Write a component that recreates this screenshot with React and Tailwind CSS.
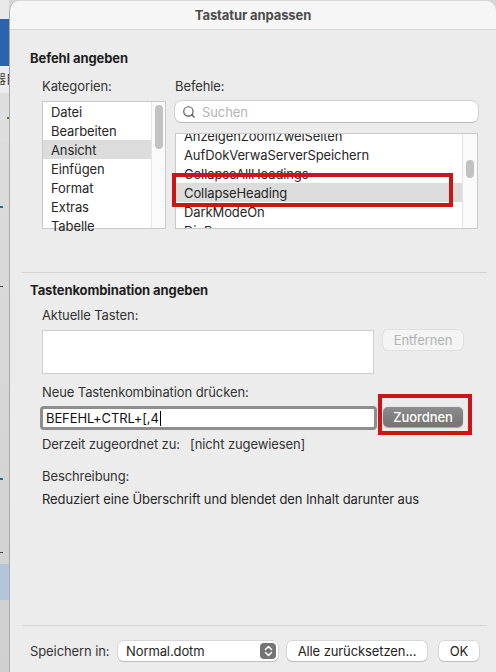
import React from 'react';
import { Search } from 'lucide-react';

const categories = ['Datei', 'Bearbeiten', 'Ansicht', 'Einfügen', 'Format', 'Extras', 'Tabelle'];
const commands = ['AnzeigenZoomZweiSeiten', 'AufDokVerwaServerSpeichern', 'CollapseAllHeadings', 'CollapseHeading', 'DarkModeOn', 'DinPane'];

// sliver of the Word window behind the sheet
const Backdrop = () => (
  <div className="flex w-[9px] shrink-0 flex-col overflow-hidden">
    <div className="h-[19px] bg-[#e9e9e9]" />
    <div className="h-[47px] bg-[#2b64ad]" />
    <div className="flex h-[27px] items-center overflow-hidden bg-[#ececec]">
      <span className="-ml-[6px] whitespace-nowrap text-[12px] leading-none text-[#333]">器目</span>
    </div>
    <div className="flex h-[50px] items-center justify-end bg-[#dedede]">
      <div className="h-[2px] w-[2px] bg-[#3c8a3c]" />
    </div>
    <div className="flex flex-1 flex-col bg-linear-to-b from-[#dcdcdc] to-[#d0d0d0]">
      <div className="mt-[63px] h-[2px] w-[3px] bg-[#2b64ad]" />
      <div className="mt-[78px] h-px w-[3px] bg-[#444]" />
      <div className="mt-[191px] h-[2px] w-[3px] bg-[#2b64ad]" />
      <div className="mt-[72px] h-px w-[3px] bg-[#444]" />
      <div className="mt-[11px] h-[36px] bg-[#b3c5db]" />
    </div>
  </div>
);

const Button = ({ children, className = '' }) => (
  <div className={`flex h-[20px] items-center justify-center rounded-[5px] bg-white text-[#222] shadow-[0_0_0_0.5px_rgba(0,0,0,0.18),0_1px_1px_rgba(0,0,0,0.12)] ${className}`}>
    {children}
  </div>
);

export default function App() {
  return (
    <div className="flex h-[672px] w-[496px] overflow-hidden bg-[#d6d6d6] font-['Inter','Noto_Sans_CJK_JP',sans-serif] text-[13px] leading-[16px] tracking-[-0.1px] text-[#262626]">
      <Backdrop />

      <div className="mt-px flex flex-1 flex-col overflow-hidden rounded-tl-[10px] rounded-tr-[10px] border-l border-[#a9a9a9] bg-[#ececec]">
        {/* title bar */}
        <div className="flex h-[29px] items-center justify-center border-b border-[#d3d3d3] bg-[#f6f6f6] font-bold text-[#4c4c4c]">
          Tastatur anpassen
        </div>

        {/* Befehl angeben */}
        <div className="mt-[20px] pl-[20px] font-bold text-[#1e1e1e]">Befehl angeben</div>
        <div className="mt-[12px] flex pl-[32px] text-[#333]">
          <span className="w-[133px]">Kategorien:</span>
          <span>Befehle:</span>
        </div>
        <div className="mt-[7px] flex gap-[9px] pl-[32px]">
          <div className="flex h-[128px] w-[124px] border border-[#c9c9c9] bg-white">
            <div className="flex-1">
              {categories.map((c) => (
                <div key={c} className={`flex h-[19px] items-center pl-[8px] ${c === 'Ansicht' ? 'bg-[#dcdcdc]' : ''}`}>{c}</div>
              ))}
            </div>
            <div className="flex w-[14px] justify-center border-l border-[#e4e4e4] bg-[#fafafa]">
              <div className="mt-[3px] h-[44px] w-[8px] rounded-full bg-[#c2c2c2]" />
            </div>
          </div>

          <div className="flex w-[303px] flex-col">
            <div className="flex h-[21px] items-center gap-[6px] rounded-[6px] bg-white pl-[7px] shadow-[0_0_0_0.5px_rgba(0,0,0,0.2),0_0.5px_1px_rgba(0,0,0,0.12)]">
              <Search size={14} strokeWidth={2} className="text-[#555]" />
              <span className="text-[#b4b4b4]">Suchen</span>
            </div>
            <div className="relative mt-[11px] flex h-[96px] border border-[#c9c9c9] bg-white">
              <div className="flex-1 overflow-hidden">
                <div className="-mt-[8px]">
                  {commands.map((c) => (
                    <div key={c} className={`flex h-[19px] items-center pl-[8px] ${c === 'CollapseHeading' ? 'bg-[#dcdcdc]' : ''}`}>{c}</div>
                  ))}
                </div>
              </div>
              <div className="flex w-[15px] justify-center border-l border-[#e4e4e4] bg-[#fafafa]">
                <div className="mt-[26px] h-[18px] w-[8px] rounded-full bg-[#c2c2c2]" />
              </div>
              <div className="absolute left-[-4px] top-[39px] h-[34px] w-[281px] border-[4px] border-[#cc1517]" />
            </div>
          </div>
        </div>

        <div className="ml-[12px] mr-[9px] mt-[43px] h-px bg-[#d3d3d3]" />

        {/* Tastenkombination angeben */}
        <div className="mt-[9px] pl-[20px] font-bold text-[#1e1e1e]">Tastenkombination angeben</div>
        <div className="mt-[9px] pl-[32px] text-[#333]">Aktuelle Tasten:</div>
        <div className="mt-[7px] flex items-start pl-[32px]">
          <div className="h-[44px] w-[332px] border border-[#cdcdcd] bg-white" />
          <div className="ml-[9px] flex h-[20px] w-[80px] items-center justify-center rounded-[5px] bg-[#f4f4f4] text-[#b3b3b3] shadow-[0_0_0_0.5px_rgba(0,0,0,0.1)]">
            Entfernen
          </div>
        </div>
        <div className="mt-[10px] pl-[32px] text-[#333]">Neue Tastenkombination drücken:</div>
        <div className="mt-[6px] flex items-start pl-[30px]">
          <div className="flex h-[24px] w-[337px] items-center rounded-[4px] border-[3px] border-[#8e8e8e] bg-white pl-[3px] text-[#111]">
            BEFEHL+CTRL+[,4
            <span className="ml-px h-[15px] w-px bg-black" />
          </div>
          <div className="relative ml-[6px] mt-px">
            <div className="flex h-[20px] w-[80px] items-center justify-center rounded-[5px] bg-linear-to-b from-[#8d8d8d] to-[#737373] font-medium text-white shadow-[0_0.5px_1px_rgba(0,0,0,0.3)]">
              Zuordnen
            </div>
            <div className="absolute left-[-5px] top-[-13px] h-[41px] w-[94px] border-[4px] border-[#cc1517]" />
          </div>
        </div>
        <div className="mt-[6px] flex pl-[32px] text-[#333]">
          <span className="w-[148px]">Derzeit zugeordnet zu:</span>
          <span>[nicht zugewiesen]</span>
        </div>
        <div className="mt-[16px] pl-[32px] text-[#333]">Beschreibung:</div>
        <div className="mt-[7px] pl-[32px] text-[#262626]">Reduziert eine Überschrift und blendet den Inhalt darunter aus</div>

        <div className="flex-1" />
        <div className="ml-[12px] mr-[9px] h-px bg-[#d3d3d3]" />

        {/* footer */}
        <div className="mb-[11px] mt-[15px] flex h-[20px] items-center pl-[20px]">
          <span className="w-[88px] text-[#333]">Speichern in:</span>
          <div className="flex h-[20px] w-[160px] items-center justify-between rounded-[5px] bg-white pl-[8px] pr-[2px] shadow-[0_0_0_0.5px_rgba(0,0,0,0.18),0_1px_1px_rgba(0,0,0,0.12)]">
            <span>Normal.dotm</span>
            <div className="flex h-[16px] w-[16px] items-center justify-center rounded-[4px] bg-[#747474]">
              <svg width="9" height="12" viewBox="0 0 9 12" fill="none" stroke="white" strokeWidth="1.5" strokeLinecap="round" strokeLinejoin="round">
                <path d="M1.5 4.5 L4.5 1.5 L7.5 4.5" />
                <path d="M1.5 7.5 L4.5 10.5 L7.5 7.5" />
              </svg>
            </div>
          </div>
          <Button className="ml-[9px] w-[140px]">Alle zurücksetzen...</Button>
          <Button className="ml-[12px] w-[40px]">OK</Button>
        </div>
      </div>
    </div>
  );
}
